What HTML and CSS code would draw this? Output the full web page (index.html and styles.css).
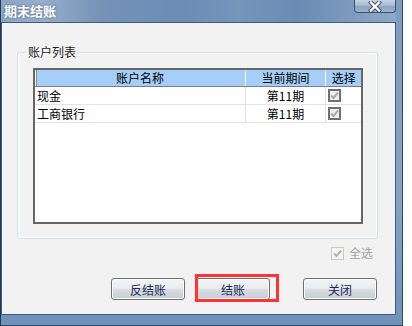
FILE: index.html
```html
<!DOCTYPE html>
<html lang="zh-CN">
<head>
    <meta charset="UTF-8">
    <title>期末结账</title>
    <link rel="stylesheet" href="styles.css">
</head>
<body>
<div class="window">
    <div class="titlebar">
        <span class="title">期末结账</span>
        <span class="close-btn">
            <svg width="18" height="11" viewBox="0 0 18 11">
                <path d="M5 1.5 L13 9.5 M13 1.5 L5 9.5" stroke="#3b4f6b" stroke-width="4.2" stroke-linecap="square"/>
                <path d="M5 1.5 L13 9.5 M13 1.5 L5 9.5" stroke="#ffffff" stroke-width="2.4" stroke-linecap="square"/>
            </svg>
        </span>
    </div>
    <div class="client">
        <fieldset class="group">
            <legend>账户列表</legend>
            <table class="grid">
                <colgroup>
                    <col class="c-name">
                    <col class="c-period">
                    <col class="c-pick">
                </colgroup>
                <thead>
                    <tr>
                        <th class="first">账户名称</th>
                        <th>当前期间</th>
                        <th>选择</th>
                    </tr>
                </thead>
                <tbody>
                    <tr>
                        <td>现金</td>
                        <td class="center">第11期</td>
                        <td><span class="chk"><svg width="9" height="9" viewBox="0 0 9 9"><path d="M1 4.5 L3.5 7 L8 1.5" stroke="#a9a9a9" stroke-width="2" fill="none"/></svg></span></td>
                    </tr>
                    <tr>
                        <td>工商银行</td>
                        <td class="center">第11期</td>
                        <td><span class="chk"><svg width="9" height="9" viewBox="0 0 9 9"><path d="M1 4.5 L3.5 7 L8 1.5" stroke="#a9a9a9" stroke-width="2" fill="none"/></svg></span></td>
                    </tr>
                    <tr class="filler"><td></td><td></td><td></td></tr>
                </tbody>
            </table>
        </fieldset>
        <div class="select-all">
            <span class="chk-off"><svg width="9" height="9" viewBox="0 0 9 9"><path d="M1 4.5 L3.5 7 L8 1.5" stroke="#b5b5ae" stroke-width="2" fill="none"/></svg></span>
            <span class="label">全选</span>
        </div>
        <div class="buttons">
            <button class="btn">反结账</button>
            <button class="btn marked">结账</button>
            <button class="btn close">关闭</button>
        </div>
    </div>
</div>
</body>
</html>
```

FILE: styles.css
```css
body {
    margin: 0;
    background: #ffffff;
    font-family: "Noto Sans CJK SC", "Liberation Sans", sans-serif;
    font-size: 12px;
}

.window {
    width: 403px;
    height: 326px;
    box-sizing: border-box;
    padding: 0 6px 10px 0;
    border-left: 1px solid #1f3957;
    border-right: 1px solid #2b4666;
    border-bottom: 1px solid #2b4666;
    background: linear-gradient(180deg, #7f9cc0 0%, #86a3c6 60%, #6f92bb 100%);
    display: flex;
    flex-direction: column;
}

.titlebar {
    height: 22px;
    display: flex;
    justify-content: space-between;
    align-items: flex-start;
    background: linear-gradient(90deg, #8ca6c5 0%, #97afcc 10%, #7693b8 25%, #6a8cb5 45%, #7595bb 60%, #6a8bb3 75%, #8ea8c8 100%);
}

.title {
    color: #ffffff;
    font-weight: bold;
    font-size: 13px;
    line-height: 14px;
    margin: 4px 0 0 3px;
    text-shadow: 0 0 3px rgba(40, 60, 90, 0.6);
}

.close-btn {
    width: 42px;
    height: 13px;
    box-sizing: border-box;
    border: 1px solid #3d5170;
    border-top: none;
    border-radius: 0 0 4px 4px;
    background: linear-gradient(180deg, #c7d3e2 0%, #a8bad0 45%, #8ea5c2 55%, #9cb2cc 100%);
    display: flex;
    justify-content: center;
    align-items: center;
}

.client {
    flex: 1;
    background: #f2f2f2;
    border: 1px solid #3f5b7e;
    display: flex;
    flex-direction: column;
}

.group {
    margin: 22px 0 0 15px;
    width: 361px;
    height: 194px;
    box-sizing: border-box;
    padding: 9px 14px 14px 8px;
    border: 1px solid #d5dfe5;
    border-radius: 3px;
    box-shadow: inset 0 0 0 1px #ffffff;
    min-width: 0;
}

.group legend {
    padding: 0 2px;
    line-height: 14px;
    color: #1e1e1e;
}

.grid {
    margin-left: 7px;
    width: 330px;
    height: 156px;
    border: 2px solid #666666;
    border-collapse: collapse;
    table-layout: fixed;
    background: #ffffff;
}

.c-name { width: 210px; }
.c-period { width: 80px; }
.c-pick { width: 36px; }

.grid th {
    height: 16px;
    padding: 0;
    font-weight: normal;
    line-height: 16px;
    background: #a5cff8;
    border-right: 1px solid #ffffff;
    border-bottom: 1px solid #7d7d7d;
    color: #000000;
}

.grid th.first {
    box-shadow: inset 1px 0 0 #ffffff, inset 2px 0 0 #8a8a8a;
}

.grid th:last-child {
    border-right: none;
}

.grid td {
    height: 17px;
    padding: 0 0 0 2px;
    line-height: 17px;
    border-right: 1px solid #e3e3e3;
    border-bottom: 1px solid #e3e3e3;
    color: #000000;
    white-space: nowrap;
}

.grid td.center {
    text-align: center;
    padding: 0;
}

.grid td:last-child {
    border-right: none;
}

.grid tr.filler td {
    height: auto;
    border: none;
}

.chk {
    width: 13px;
    height: 13px;
    box-sizing: border-box;
    border: 2px solid #707070;
    background: #efefef;
    display: flex;
    justify-content: center;
    align-items: center;
}

.select-all {
    margin: 7px 22px 0 0;
    height: 14px;
    display: flex;
    justify-content: flex-end;
    align-items: center;
    gap: 5px;
}

.chk-off {
    width: 13px;
    height: 13px;
    box-sizing: border-box;
    border: 1px solid #cacac2;
    background: #f4f4f4;
    display: flex;
    justify-content: center;
    align-items: center;
}

.select-all .label {
    color: #a3a3a3;
    line-height: 14px;
}

.buttons {
    margin-top: 18px;
    padding-left: 109px;
    display: flex;
}

.btn {
    width: 74px;
    height: 22px;
    padding: 0;
    border: 1px solid #707070;
    border-radius: 3px;
    background: linear-gradient(180deg, #f3f3f3 0%, #e9ebee 45%, #d6dbe0 55%, #c8ced5 100%);
    box-shadow: inset 0 0 0 1px #fbfbfb;
    font-family: "Noto Sans CJK SC", "Liberation Sans", sans-serif;
    font-size: 12px;
    color: #1c2c58;
}

.btn.marked {
    margin-left: 11px;
    position: relative;
}

.btn.marked::after {
    content: "";
    position: absolute;
    left: -2px;
    top: -5px;
    width: 84px;
    height: 28px;
    box-sizing: border-box;
    border: 3px solid #ff3333;
}

.btn.close {
    margin-left: 33px;
}
```
